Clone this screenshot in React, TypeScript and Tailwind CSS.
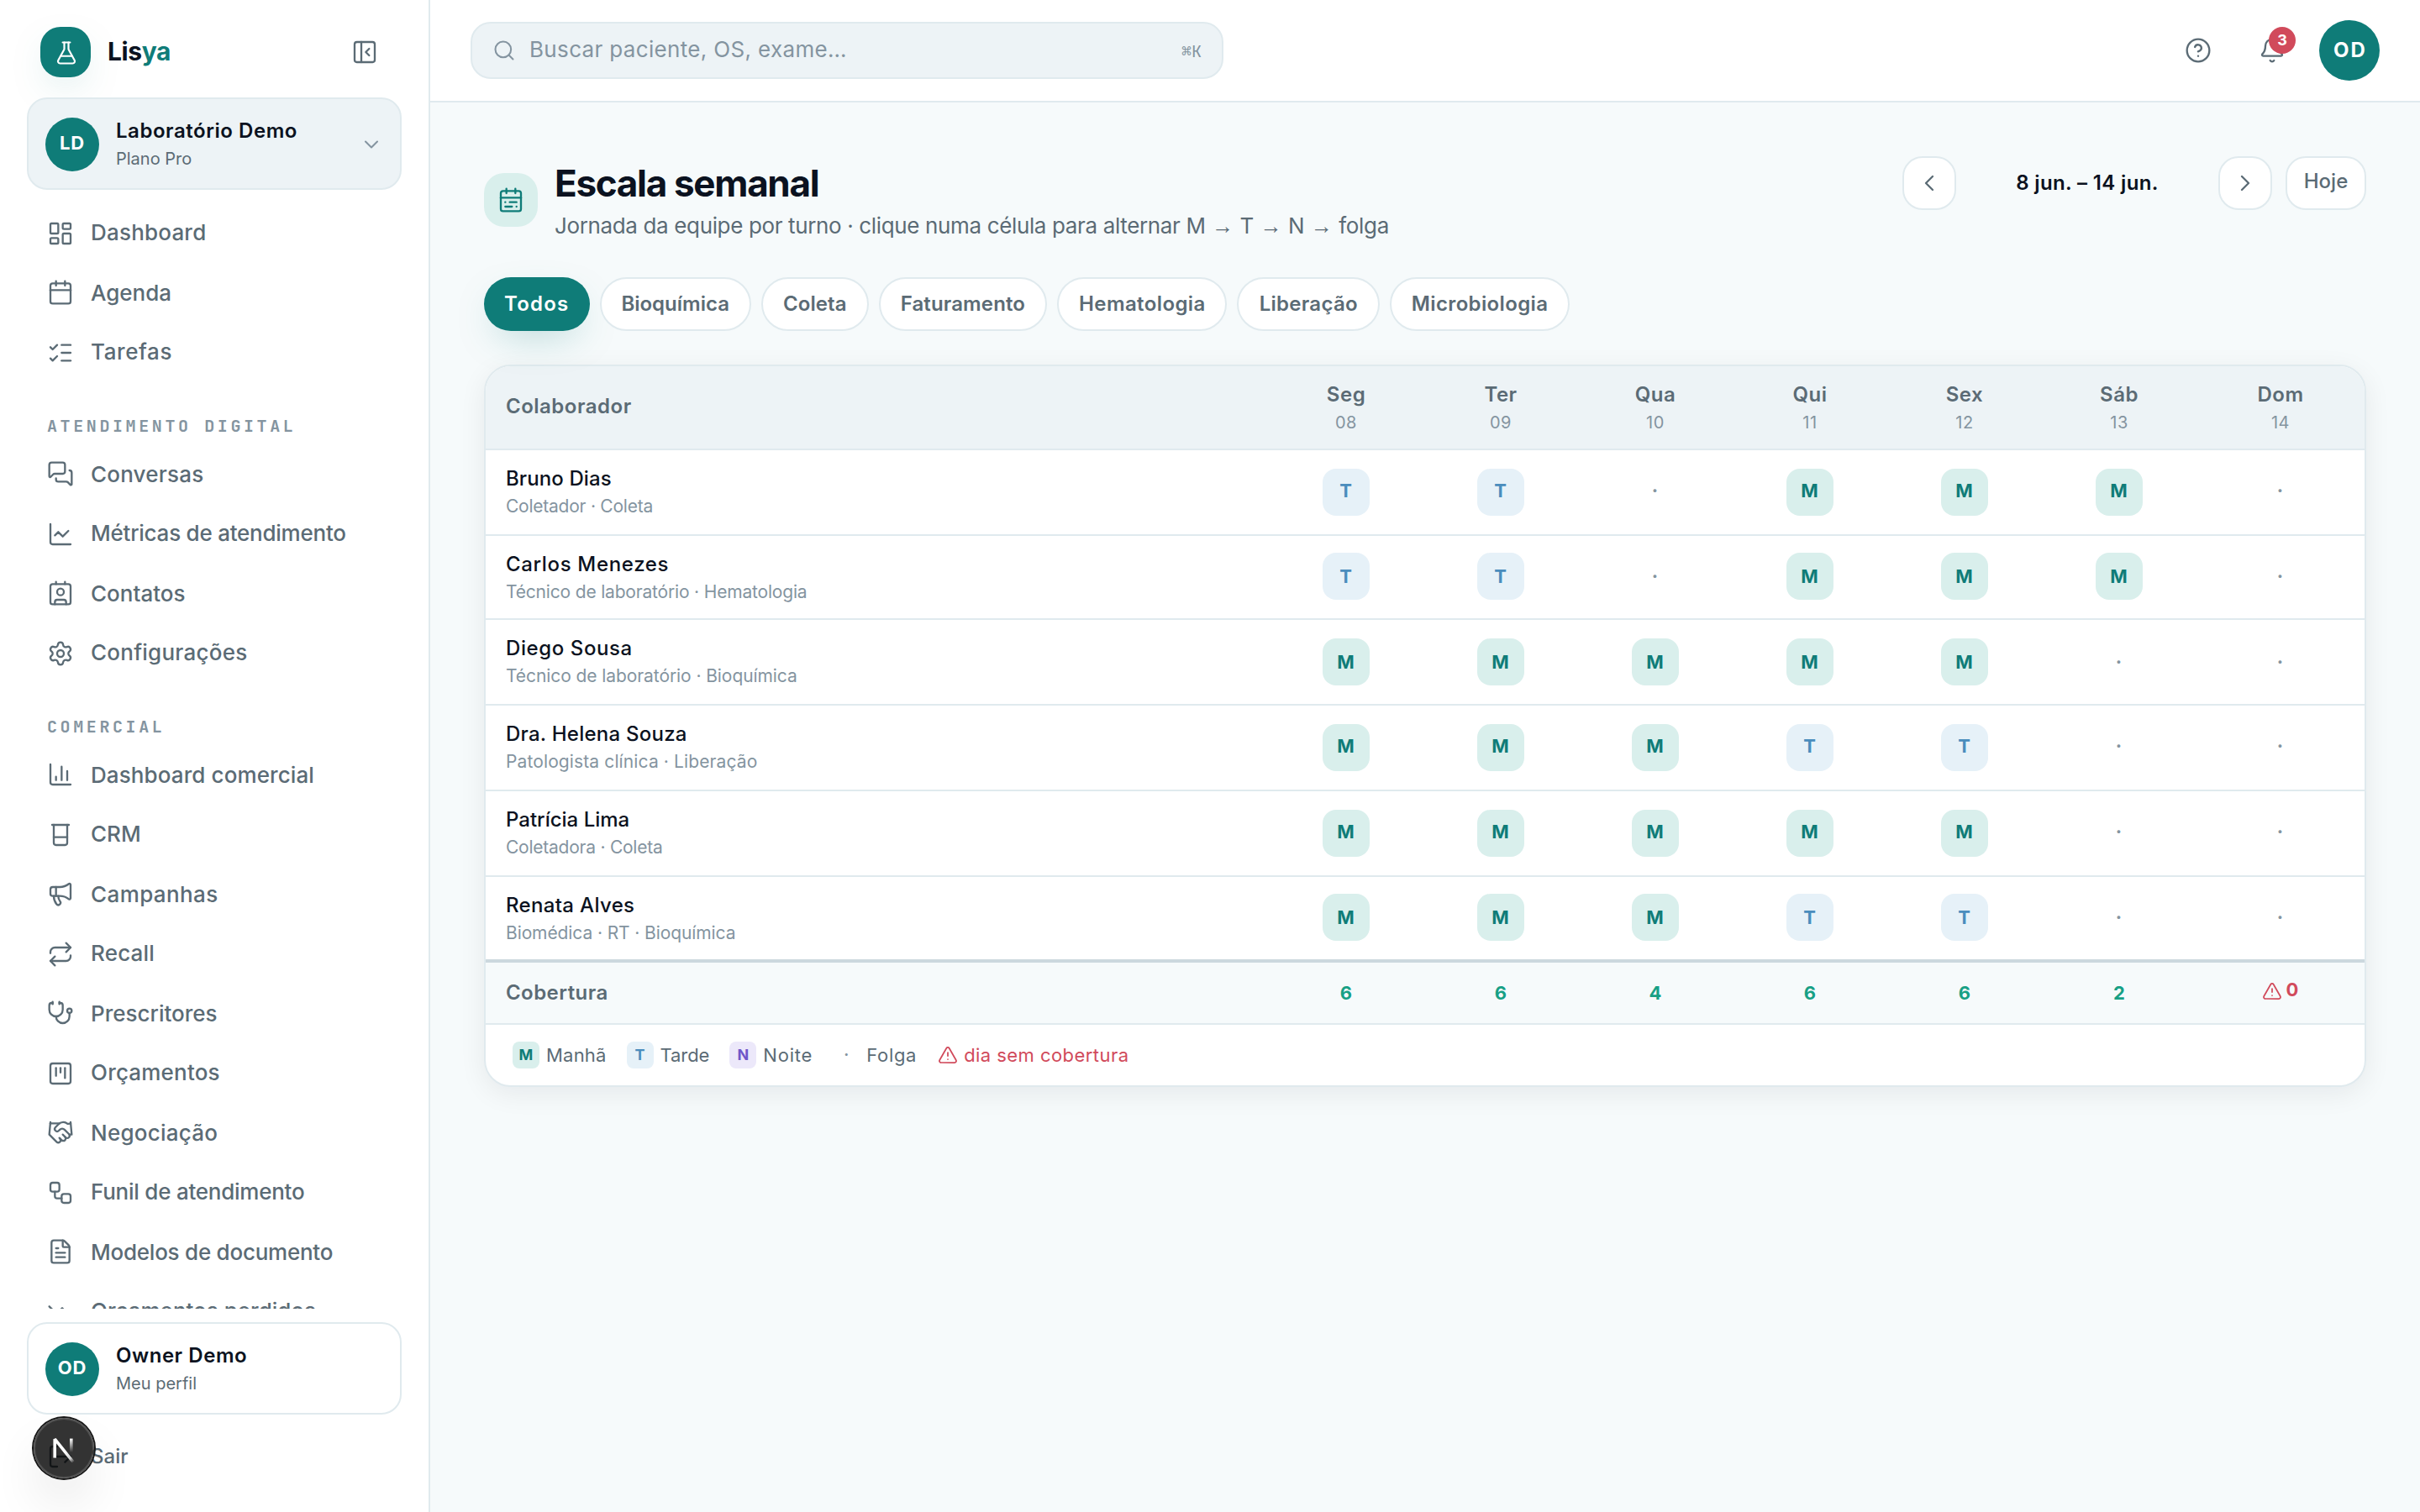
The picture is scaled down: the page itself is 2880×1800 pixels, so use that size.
import type { ReactNode } from 'react';
import {
  Beaker,
  Bell,
  Calendar,
  CalendarRange,
  ChartColumn,
  ChartLine,
  ChevronDown,
  ChevronLeft,
  ChevronRight,
  CircleQuestionMark,
  Contact,
  FileText,
  FlaskConical,
  Handshake,
  LayoutDashboard,
  ListChecks,
  LogOut,
  Megaphone,
  MessagesSquare,
  PanelLeftClose,
  Repeat,
  Search,
  Settings,
  SquareKanban,
  Stethoscope,
  TrendingDown,
  TriangleAlert,
  Workflow,
  type LucideIcon,
} from 'lucide-react';

const STROKE = 1.75;

type NavEntry = { label: string; icon: LucideIcon; tracking?: string };
type NavSection = { title?: string; items: NavEntry[] };

const sections: NavSection[] = [
  {
    items: [
      { label: 'Dashboard', icon: LayoutDashboard, tracking: 'tracking-[0.1px]' },
      { label: 'Agenda', icon: Calendar },
      { label: 'Tarefas', icon: ListChecks, tracking: 'tracking-[0.3px]' },
    ],
  },
  {
    title: 'Atendimento digital',
    items: [
      { label: 'Conversas', icon: MessagesSquare, tracking: 'tracking-[0.1px]' },
      { label: 'Métricas de atendimento', icon: ChartLine, tracking: 'tracking-[-0.12px]' },
      { label: 'Contatos', icon: Contact },
      { label: 'Configurações', icon: Settings, tracking: 'tracking-[0.12px]' },
    ],
  },
  {
    title: 'Comercial',
    items: [
      { label: 'Dashboard comercial', icon: ChartColumn, tracking: 'tracking-[0.05px]' },
      { label: 'CRM', icon: Beaker },
      { label: 'Campanhas', icon: Megaphone, tracking: 'tracking-[0.2px]' },
      { label: 'Recall', icon: Repeat, tracking: 'tracking-[0.1px]' },
      { label: 'Prescritores', icon: Stethoscope },
      { label: 'Orçamentos', icon: SquareKanban, tracking: 'tracking-[0.1px]' },
      { label: 'Negociação', icon: Handshake, tracking: 'tracking-[0.12px]' },
      { label: 'Funil de atendimento', icon: Workflow, tracking: 'tracking-[-0.12px]' },
      { label: 'Modelos de documento', icon: FileText, tracking: 'tracking-[-0.12px]' },
      { label: 'Orçamentos perdidos', icon: TrendingDown },
    ],
  },
];

const filters = [
  { name: 'Todos', tracking: 'tracking-[0.6px]' },
  { name: 'Bioquímica', tracking: 'tracking-normal' },
  { name: 'Coleta', tracking: 'tracking-[0.05px]' },
  { name: 'Faturamento', tracking: 'tracking-[0.06px]' },
  { name: 'Hematologia', tracking: 'tracking-[0.2px]' },
  { name: 'Liberação', tracking: 'tracking-[0.13px]' },
  { name: 'Microbiologia', tracking: 'tracking-[0.18px]' },
];

const days = [
  { name: 'Seg', date: '08', cover: 6 },
  { name: 'Ter', date: '09', cover: 6 },
  { name: 'Qua', date: '10', cover: 4 },
  { name: 'Qui', date: '11', cover: 6 },
  { name: 'Sex', date: '12', cover: 6 },
  { name: 'Sáb', date: '13', cover: 2 },
  { name: 'Dom', date: '14', cover: 0 },
];

const staff = [
  { name: 'Bruno Dias', role: 'Coletador · Coleta', shifts: 'TT·MMM·', nameTracking: 'tracking-[0.05px]', roleTracking: 'tracking-[-0.12px]' },
  { name: 'Carlos Menezes', role: 'Técnico de laboratório · Hematologia', shifts: 'TT·MMM·', nameTracking: 'tracking-[0.33px]', roleTracking: 'tracking-[-0.09px]' },
  { name: 'Diego Sousa', role: 'Técnico de laboratório · Bioquímica', shifts: 'MMMMM··', nameTracking: 'tracking-[0.3px]', roleTracking: 'tracking-[-0.04px]' },
  { name: 'Dra. Helena Souza', role: 'Patologista clínica · Liberação', shifts: 'MMMTT··', nameTracking: 'tracking-[0.12px]', roleTracking: 'tracking-[0.06px]' },
  { name: 'Patrícia Lima', role: 'Coletadora · Coleta', shifts: 'MMMMM··', nameTracking: 'tracking-normal', roleTracking: 'tracking-[-0.12px]' },
  { name: 'Renata Alves', role: 'Biomédica · RT · Bioquímica', shifts: 'MMMTT··', nameTracking: 'tracking-[0.17px]', roleTracking: 'tracking-[-0.05px]' },
];

const shiftTone: Record<string, string> = {
  M: 'bg-[#d9efec] text-[#0f7c78]',
  T: 'bg-[#e6f1f8] text-[#4a8dbd]',
  N: 'bg-[#ece8fa] text-[#6f57c9]',
  '·': 'text-[#8494a0]',
};

const rowGrid = 'grid grid-cols-[466px_repeat(6,92px)_100px] items-center';

function Avatar({ initials, className }: { initials: string; className: string }) {
  return (
    <span className={`flex shrink-0 items-center justify-center rounded-full bg-[#0f7c78] font-bold text-white ${className}`}>
      {initials}
    </span>
  );
}

function AccountCard({ initials, name, detail, className, children }: {
  initials: string;
  name: string;
  detail: string;
  className: string;
  children?: ReactNode;
}) {
  return (
    <div className={`mx-4 flex h-[55px] shrink-0 items-center gap-2.5 rounded-xl border border-[#e0eaee] px-2.5 ${className}`}>
      <Avatar initials={initials} className="size-8 text-[11px] tracking-[0.4px]" />
      <div className="min-w-0 flex-1">
        <div className="text-[12px] leading-[18px] font-semibold tracking-[0.27px] text-[#0b1220]">{name}</div>
        <div className="text-[10px] leading-[15px] text-[#5b6b75]">{detail}</div>
      </div>
      {children}
    </div>
  );
}

function Sidebar() {
  return (
    <aside className="flex w-64 shrink-0 flex-col border-r border-[#e0eaee] bg-white pt-4 pb-4">
      <div className="mb-3 flex h-[30px] shrink-0 items-center gap-2.5 px-6">
        <span className="flex size-[30px] items-center justify-center rounded-xl bg-[#0f7c78] text-white shadow-[0_8px_24px_-8px_rgba(15,124,120,0.35)]">
          <FlaskConical size={15} strokeWidth={STROKE} />
        </span>
        <span className="flex-1 text-[15px] font-bold tracking-[-0.2px] text-[#0b1220]">
          Lis<span className="text-[#0f7c78]">ya</span>
        </span>
        <button className="flex size-7 items-center justify-center text-[#5b6b75]">
          <PanelLeftClose size={16} strokeWidth={STROKE} />
        </button>
      </div>

      <AccountCard initials="LD" name="Laboratório Demo" detail="Plano Pro" className="bg-[#edf3f6]">
        <ChevronDown size={14} strokeWidth={STROKE} className="text-[#8494a0]" />
      </AccountCard>

      <nav className="min-h-0 flex-1 overflow-hidden px-4 pt-2">
        {sections.map((section, index) => (
          <div key={index}>
            {section.title && (
              <div className="h-[37px] px-3 pt-[18.25px] font-['JetBrains_Mono','Liberation_Mono',monospace] text-[10px] leading-[15px] font-semibold tracking-[0.18em] text-[#8494a0] uppercase">
                {section.title}
              </div>
            )}
            {section.items.map(({ label, icon: Icon, tracking = '' }) => (
              <a key={label} className={`flex items-center gap-2.5 px-3 py-2 text-[13px] leading-[19.5px] font-medium text-[#5b6b75] ${tracking}`}>
                <Icon size={16} strokeWidth={STROKE} className="shrink-0" />
                {label}
              </a>
            ))}
          </div>
        ))}
      </nav>

      <AccountCard initials="OD" name="Owner Demo" detail="Meu perfil" className="mt-2 bg-white" />
      <a className="mx-4 mt-2 flex shrink-0 items-center gap-2.5 px-3 py-2 text-[12px] leading-[18px] font-medium text-[#5b6b75]">
        <LogOut size={16} strokeWidth={STROKE} />
        Sair
      </a>
    </aside>
  );
}

function TopBar() {
  return (
    <header className="flex h-[61px] shrink-0 items-center border-b border-[#e0eaee] bg-white px-6">
      <div className="flex h-[34px] w-md items-center gap-2 rounded-xl border border-[#e0eaee] bg-[#edf3f6] px-3 text-[#8494a0]">
        <Search size={14} strokeWidth={STROKE} />
        <span className="flex-1 text-[13px] tracking-[0.17px]">Buscar paciente, OS, exame…</span>
        <kbd className="font-['JetBrains_Mono','Liberation_Mono',monospace] text-[10px]">
          <span className="font-['DejaVu_Sans_Mono',monospace]">⌘</span>K
        </kbd>
      </div>
      <div className="ml-auto flex items-center gap-1 text-[#5b6b75]">
        <button className="flex size-10 items-center justify-center">
          <CircleQuestionMark size={16} strokeWidth={STROKE} />
        </button>
        <button className="relative mr-1 flex size-10 items-center justify-center">
          <Bell size={16} strokeWidth={STROKE} />
          <span className="absolute top-1.5 right-1.5 flex size-4 items-center justify-center rounded-full bg-[#d14a5b] text-[9px] font-bold text-white">
            3
          </span>
        </button>
        <Avatar initials="OD" className="size-9 pl-px text-[12px] tracking-[1px]" />
      </div>
    </header>
  );
}

function Arrow() {
  return <span className="font-['Liberation_Sans',sans-serif] leading-none">→</span>;
}

function PageHeading() {
  return (
    <div className="flex h-[52px] items-start justify-between">
      <div className="flex h-full items-center gap-2.5">
        <span className="flex size-8 items-center justify-center rounded-xl bg-[#d9efec] text-[#0f7c78]">
          <CalendarRange size={16} strokeWidth={STROKE} />
        </span>
        <div>
          <h1 className="pt-px text-[22px] leading-[30px] font-bold tracking-[-0.65px] text-[#0b1220]">Escala semanal</h1>
          <p className="mt-px text-[13px] leading-[19.5px] text-[#5b6b75]">
            <span className="tracking-[-0.18px]">Jornada da equipe por turno · clique numa célula para alternar </span>M <Arrow /> T{' '}
            <Arrow /> N <Arrow /> <span className="tracking-[-0.15px]">folga</span>
          </p>
        </div>
      </div>
      <div className="flex items-center gap-2 text-[#5b6b75]">
        <button className="flex size-8 items-center justify-center rounded-xl border border-[#e0eaee] bg-white">
          <ChevronLeft size={16} strokeWidth={STROKE} />
        </button>
        <span className="w-[140px] text-center text-[12px] font-semibold tracking-[0.18px] text-[#0b1220]">8 jun. – 14 jun.</span>
        <button className="flex size-8 items-center justify-center rounded-xl border border-[#e0eaee] bg-white">
          <ChevronRight size={16} strokeWidth={STROKE} />
        </button>
        <button className="flex h-8 w-12 items-center justify-center rounded-xl border border-[#e0eaee] bg-white pb-0.5 text-[12px] font-medium">
          Hoje
        </button>
      </div>
    </div>
  );
}

function Filters() {
  return (
    <div className="mt-5 flex gap-1.5">
      {filters.map(({ name, tracking }, index) => (
        <button
          key={name}
          className={`h-8 rounded-full px-3 text-[12px] font-semibold ${tracking} ${
            index === 0
              ? 'bg-[#0f7c78] text-white shadow-[0_8px_24px_-8px_rgba(15,124,120,0.35)]'
              : 'border border-[#e0eaee] bg-white text-[#5b6b75]'
          }`}
        >
          {name}
        </button>
      ))}
    </div>
  );
}

function LegendItem({ code, label, tracking }: { code: string; label: string; tracking: string }) {
  return (
    <span className="flex items-center gap-1">
      <span className={`flex size-4 items-center justify-center rounded text-[9px] font-bold ${shiftTone[code]}`}>{code}</span>
      <span className={tracking}>{label}</span>
    </span>
  );
}

function Schedule() {
  return (
    <section className="mt-5 overflow-hidden rounded-2xl border border-[#e0eaee] bg-white shadow-[0_4px_16px_rgba(11,18,32,0.07)]">
      <div className={`${rowGrid} h-[49.75px] border-b border-[#e0eaee] bg-[#edf3f6] text-center text-[12px] leading-[18px] font-semibold tracking-[0.25px] text-[#5b6b75]`}>
        <span className="px-3 pb-px text-left">Colaborador</span>
        {days.map((day) => (
          <span key={day.name}>
            {day.name}
            <span className="block text-[10px] leading-[15px] font-normal text-[#8494a0]">{day.date}</span>
          </span>
        ))}
      </div>

      {staff.map((person, index) => (
        <div
          key={person.name}
          className={`${rowGrid} ${index < staff.length - 1 ? 'h-[50.75px] border-b border-[#e0eaee]' : 'h-[49.75px]'}`}
        >
          <div className="px-3">
            <div className={`text-[12px] leading-[18px] font-medium text-[#0b1220] ${person.nameTracking}`}>{person.name}</div>
            <div className={`text-[10.5px] leading-[15.75px] text-[#8494a0] ${person.roleTracking}`}>{person.role}</div>
          </div>
          {person.shifts.split('').map((code, day) => (
            <button
              key={day}
              className={`mx-auto flex size-7 items-center justify-center rounded-lg pr-[0.5px] pb-[0.5px] text-[11px] font-bold ${shiftTone[code]}`}
            >
              {code}
            </button>
          ))}
        </div>
      ))}

      <div className={`${rowGrid} h-[38px] border-t-2 border-[#ccd8de] bg-[#f6fafb] text-center text-[11px] font-bold text-[#17a085]`}>
        <span className="px-3 text-left text-[12px] font-semibold tracking-[0.22px] text-[#5b6b75]">Cobertura</span>
        {days.map((day) =>
          day.cover > 0 ? (
            <span key={day.name}>{day.cover}</span>
          ) : (
            <span key={day.name} className="mb-0.5 flex items-center justify-center gap-0.5 text-[#d14a5b]">
              <TriangleAlert size={12} strokeWidth={STROKE} />
              <span className="pb-0.5">{day.cover}</span>
            </span>
          ),
        )}
      </div>

      <div className="flex items-center gap-3 border-t border-[#e0eaee] px-4 py-2.5 text-[11px] leading-4 text-[#5b6b75]">
        <LegendItem code="M" label="Manhã" tracking="tracking-[0.1px]" />
        <LegendItem code="T" label="Tarde" tracking="tracking-[-0.05px]" />
        <LegendItem code="N" label="Noite" tracking="tracking-[0.4px]" />
        <LegendItem code="·" label="Folga" tracking="tracking-[0.35px]" />
        <span className="flex items-center gap-1 text-[#d14a5b]">
          <TriangleAlert size={12} strokeWidth={STROKE} />
          <span className="tracking-[0.22px]">dia sem cobertura</span>
        </span>
      </div>
    </section>
  );
}

function DevBadge() {
  return (
    <div className="absolute bottom-5 left-5 size-9 rounded-full bg-black/80 shadow-[0_0_0_1px_#171717,inset_0_0_0_1px_rgba(255,255,255,0.14),0_16px_32px_-8px_rgba(0,0,0,0.24)]">
      <svg viewBox="0 0 36 36" className="size-9" fill="none" strokeWidth="1.8">
        <defs>
          <linearGradient id="diag" gradientUnits="userSpaceOnUse" x1="19" y1="20" x2="24" y2="26.5">
            <stop stopColor="#fff" />
            <stop offset="0.6" stopColor="#fff" stopOpacity="0.8" />
            <stop offset="1" stopColor="#fff" stopOpacity="0" />
          </linearGradient>
          <linearGradient id="stem" gradientUnits="userSpaceOnUse" x1="22" y1="12.3" x2="22" y2="20.5">
            <stop stopColor="#fff" />
            <stop offset="1" stopColor="#fff" stopOpacity="0" />
          </linearGradient>
        </defs>
        <path d="M23.5 26.2 L12.6 12.6 V23.8" stroke="url(#diag)" strokeLinejoin="bevel" />
        <path d="M22.4 12.3 V23" stroke="url(#stem)" />
      </svg>
    </div>
  );
}

export default function App() {
  return (
    <div className="h-[1800px] w-[2880px] overflow-hidden">
      <div className="relative flex h-[900px] w-[1440px] origin-top-left scale-200 bg-[#f6fafb] font-['Inter',sans-serif]">
        <Sidebar />
        <div className="flex min-w-0 flex-1 flex-col">
          <TopBar />
          <main className="flex-1 p-8">
            <PageHeading />
            <Filters />
            <Schedule />
          </main>
        </div>
        <DevBadge />
      </div>
    </div>
  );
}
